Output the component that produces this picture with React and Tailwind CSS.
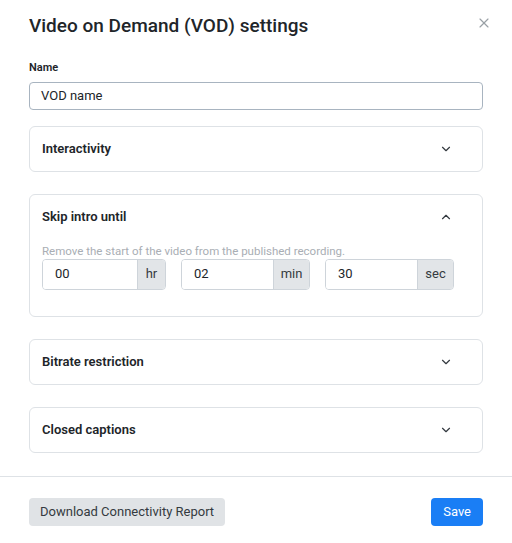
import { ChevronDown, ChevronUp, X } from "lucide-react";

const Section = ({ title, open, children }) => (
  <div className="rounded-md border border-[#dee2e6]">
    <div className="flex h-[44px] items-center justify-between pl-3 pr-[29px]">
      <span className="text-[13px] font-semibold text-[#212529]">{title}</span>
      {open ? (
        <ChevronUp className="h-3.5 w-3.5 text-[#343a40]" strokeWidth={2} />
      ) : (
        <ChevronDown className="h-3.5 w-3.5 text-[#343a40]" strokeWidth={2} />
      )}
    </div>
    {children}
  </div>
);

const TimeField = ({ value, unit, width, unitWidth }) => (
  <div className={`flex h-[31px] ${width} overflow-hidden rounded border border-[#ced4da]`}>
    <div className="flex flex-1 items-center bg-white pl-[12px] text-[13px] text-[#212529]">
      {value}
    </div>
    <div
      className={`flex ${unitWidth} items-center justify-center border-l border-[#ced4da] bg-[#e2e5e8] text-[13px] text-[#343a40]`}
    >
      {unit}
    </div>
  </div>
);

export default function App() {
  return (
    <div
      className="relative h-[543px] w-[512px] bg-white"
      style={{ fontFamily: "Roboto, 'Liberation Sans', sans-serif" }}
    >
      <div className="px-[29px] pt-[12px]">
        <div className="flex items-center justify-between">
          <h1 className="text-[19px] font-medium leading-[28px] text-[#212529]">
            Video on Demand (VOD) settings
          </h1>
          <X className="-mr-[9px] -mt-[6px] h-4 w-4 text-[#9aa0a6]" strokeWidth={1.75} />
        </div>

        <div className="mt-[20px] text-[11px] font-semibold text-[#212529]">Name</div>
        <div className="mt-[5px] flex h-[28px] items-center rounded border border-[#a8b4c0] px-[11px] text-[13px] text-[#212529]">
          VOD name
        </div>

        <div className="mt-[16px] flex flex-col gap-[22px]">
          <Section title="Interactivity" />
          <Section title="Skip intro until" open>
            <div className="px-3 pb-[26px]">
              <div className="mt-[5px] text-[11.5px] leading-[14px] text-[#a9aeb4]">
                Remove the start of the video from the published recording.
              </div>
              <div className="mt-[1px] flex gap-[15px]">
                <TimeField value="00" unit="hr" width="w-[124px]" unitWidth="w-[28px]" />
                <TimeField value="02" unit="min" width="w-[129px]" unitWidth="w-[36px]" />
                <TimeField value="30" unit="sec" width="w-[129px]" unitWidth="w-[36px]" />
              </div>
            </div>
          </Section>
          <Section title="Bitrate restriction" />
          <Section title="Closed captions" />
        </div>
      </div>

      <div className="mt-[23px] border-t border-[#dee2e6]" />

      <div className="flex items-center justify-between px-[29px] pt-[21px]">
        <button className="h-[28px] rounded bg-[#e0e3e6] px-[11px] text-[13px] text-[#343a40]">
          Download Connectivity Report
        </button>
        <button className="h-[28px] rounded bg-[#1a7ef5] px-[12px] text-[13px] text-white">
          Save
        </button>
      </div>
    </div>
  );
}
